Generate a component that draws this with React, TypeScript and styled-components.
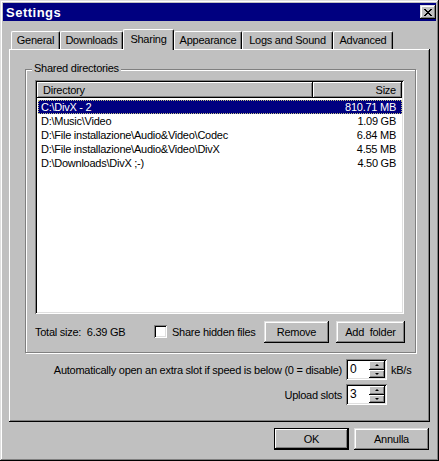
import React from 'react'
import styled, { createGlobalStyle, css } from 'styled-components'

const GlobalStyle = createGlobalStyle`
  html, body { margin: 0; padding: 0; background: #c0c0c0; }
  body { font-family: "Liberation Sans", Arial, sans-serif; font-size: 11px; letter-spacing: -0.25px; color: #000; }
  * { box-sizing: border-box; }
`

const raised = css`
  box-shadow: inset -1px -1px #000, inset 1px 1px #dfdfdf, inset -2px -2px #808080, inset 2px 2px #fff;
`
const sunken = css`
  box-shadow: inset 1px 1px #808080, inset -1px -1px #fff, inset 2px 2px #000, inset -2px -2px #dfdfdf;
`

const Window = styled.div`
  width: 439px;
  height: 461px;
  background: #c0c0c0;
  padding: 3px;
  display: flex;
  flex-direction: column;
  ${raised}
`

const TitleBar = styled.div`
  height: 18px;
  background: #000080;
  color: #fff;
  display: flex;
  align-items: center;
  justify-content: space-between;
  padding: 0 0 0 3px;
  font-weight: bold;
  font-size: 13px;
  letter-spacing: 0.5px;
`

const CloseBtn = styled.div`
  width: 16px;
  height: 14px;
  background: #c0c0c0;
  display: flex;
  align-items: center;
  justify-content: center;
  ${raised}
`

const Body = styled.div`
  flex: 1;
  padding: 8px 6px 0 6px;
  display: flex;
  flex-direction: column;
`

const TabStrip = styled.div`
  height: 20px;
  display: flex;
  align-items: flex-end;
  padding-left: 2px;
`

const Tab = styled.div<{ $active?: boolean; $w: number }>`
  position: relative;
  z-index: ${p => (p.$active ? 2 : 1)};
  width: ${p => p.$w}px;
  height: ${p => (p.$active ? 21 : 18)}px;
  margin-bottom: ${p => (p.$active ? -1 : 0)}px;
  padding-bottom: ${p => (p.$active ? 3 : 1)}px;
  background: #c0c0c0;
  border-top: 1px solid #fff;
  border-left: 1px solid #fff;
  border-right: 1px solid #000;
  border-top-left-radius: 2px;
  border-top-right-radius: 2px;
  box-shadow: inset -1px 0 #808080;
  display: flex;
  align-items: center;
  justify-content: center;
  white-space: nowrap;
`

const Panel = styled.div`
  height: 373px;
  padding: 20px 14px 0 16px;
  display: flex;
  flex-direction: column;
  box-shadow: inset -1px -1px #000, inset 1px 1px #fff, inset -2px -2px #808080;
`

const GroupBox = styled.div`
  position: relative;
  height: 284px;
  border: 1px solid #808080;
  box-shadow: inset 1px 1px #fff, 1px 1px #fff;
  padding: 10px 10px 0 9px;
  display: flex;
  flex-direction: column;
`

const GroupLabel = styled.span`
  position: absolute;
  top: -8px;
  left: 6px;
  padding: 0 2px;
  background: #c0c0c0;
`

const ListView = styled.div`
  width: 369px;
  height: 234px;
  background: #fff;
  padding: 2px;
  ${sunken}
`

const Columns = css`
  display: grid;
  grid-template-columns: 276px 89px;
`

const HeaderRow = styled.div`
  ${Columns}
  height: 16px;
`

const HeaderCell = styled.div<{ $right?: boolean }>`
  background: #c0c0c0;
  display: flex;
  align-items: center;
  justify-content: ${p => (p.$right ? 'flex-end' : 'flex-start')};
  padding: 0 6px;
  box-shadow: inset -1px -1px #000, inset 1px 1px #fff, inset -2px -2px #808080;
`

const Rows = styled.div`
  padding-top: 2px;
`

const Row = styled.div<{ $selected?: boolean }>`
  display: grid;
  grid-template-columns: 275px 89px;
  margin-left: 1px;
  height: 14px;
  line-height: 14px;
  background: ${p => (p.$selected ? '#000080' : 'transparent')};
  color: ${p => (p.$selected ? '#fff' : '#000')};
  outline: ${p => (p.$selected ? '1px dotted #c0c080' : 'none')};
  outline-offset: -1px;
`

const Cell = styled.span<{ $right?: boolean }>`
  padding: ${p => (p.$right ? '0 6px 0 0' : '0 0 0 3px')};
  text-align: ${p => (p.$right ? 'right' : 'left')};
  white-space: nowrap;
`

const ActionRow = styled.div`
  display: flex;
  align-items: center;
  margin-top: 6px;
  height: 23px;
`

const TotalSize = styled.span`
  width: 119px;
  white-space: pre;
`

const CheckLabel = styled.label`
  flex: 1;
  display: flex;
  align-items: center;
  gap: 5px;
`

const CheckBox = styled.span`
  width: 13px;
  height: 13px;
  background: #fff;
  ${sunken}
`

const Button = styled.div<{ $w: number; $default?: boolean }>`
  width: ${p => p.$w}px;
  height: 22px;
  background: #c0c0c0;
  display: flex;
  align-items: center;
  justify-content: center;
  white-space: pre;
  ${p =>
    p.$default
      ? css`
          box-shadow: inset 0 0 0 1px #000, inset -2px -2px #000, inset 2px 2px #fff, inset -3px -3px #808080;
        `
      : raised}
`

const ButtonGap = styled.span`
  width: 7px;
`

const SettingsGrid = styled.div`
  display: grid;
  grid-template-columns: 1fr 41px 25px;
  column-gap: 4px;
  row-gap: 4px;
  margin-top: 6px;
  align-items: center;
`

const SettingLabel = styled.span`
  justify-self: end;
  white-space: nowrap;
`

const Spinner = styled.div`
  height: 21px;
  background: #fff;
  padding: 2px;
  display: flex;
  ${sunken}
`

const SpinValue = styled.span`
  flex: 1;
  padding: 1px 0 0 2px;
  font-size: 12px;
`

const SpinButtons = styled.div`
  width: 16px;
  display: flex;
  flex-direction: column;
`

const SpinButton = styled.div`
  flex: 1;
  background: #c0c0c0;
  display: flex;
  align-items: center;
  justify-content: center;
  box-shadow: inset -1px -1px #000, inset 1px 1px #fff, inset -2px -2px #808080;
`

const Arrow = styled.span<{ $up?: boolean }>`
  width: 0;
  height: 0;
  border-left: 2px solid transparent;
  border-right: 2px solid transparent;
  ${p => (p.$up ? 'border-bottom: 2px solid #000;' : 'border-top: 2px solid #000;')}
`

const Footer = styled.div`
  display: flex;
  justify-content: flex-end;
  gap: 5px;
  margin-top: 6px;
  padding-right: 1px;
`

const tabs = [
  { label: 'General', w: 49 },
  { label: 'Downloads', w: 63 },
  { label: 'Sharing', w: 51, active: true },
  { label: 'Appearance', w: 68 },
  { label: 'Logs and Sound', w: 91 },
  { label: 'Advanced', w: 60 },
]

const dirs = [
  { path: 'C:\\DivX - 2', size: '810.71 MB' },
  { path: 'D:\\Music\\Video', size: '1.09 GB' },
  { path: 'D:\\File installazione\\Audio&Video\\Codec', size: '6.84 MB' },
  { path: 'D:\\File installazione\\Audio&Video\\DivX', size: '4.55 MB' },
  { path: 'D:\\Downloads\\DivX ;-)', size: '4.50 GB' },
]

function SpinBox({ value }: { value: string }) {
  return (
    <Spinner>
      <SpinValue>{value}</SpinValue>
      <SpinButtons>
        <SpinButton><Arrow $up /></SpinButton>
        <SpinButton><Arrow /></SpinButton>
      </SpinButtons>
    </Spinner>
  )
}

export default function App() {
  return (
    <>
      <GlobalStyle />
      <Window>
        <TitleBar>
          <span>Settings</span>
          <CloseBtn>
            <svg width="8" height="7" viewBox="0 0 8 7">
              <path d="M0 0 L7 7 M1 0 L8 7 M7 0 L0 7 M8 0 L1 7" stroke="#000" strokeWidth="1" shapeRendering="crispEdges" />
            </svg>
          </CloseBtn>
        </TitleBar>
        <Body>
          <TabStrip>
            {tabs.map(t => (
              <Tab key={t.label} $w={t.w} $active={t.active}>{t.label}</Tab>
            ))}
          </TabStrip>
          <Panel>
            <GroupBox>
              <GroupLabel>Shared directories</GroupLabel>
              <ListView>
                <HeaderRow>
                  <HeaderCell>Directory</HeaderCell>
                  <HeaderCell $right>Size</HeaderCell>
                </HeaderRow>
                <Rows>
                  {dirs.map((d, i) => (
                    <Row key={d.path} $selected={i === 0}>
                      <Cell>{d.path}</Cell>
                      <Cell $right>{d.size}</Cell>
                    </Row>
                  ))}
                </Rows>
              </ListView>
              <ActionRow>
                <TotalSize>{'Total size:  6.39 GB'}</TotalSize>
                <CheckLabel>
                  <CheckBox />
                  Share hidden files
                </CheckLabel>
                <Button $w={65}>Remove</Button>
                <ButtonGap />
                <Button $w={69}>{'Add  folder'}</Button>
              </ActionRow>
            </GroupBox>
            <SettingsGrid>
              <SettingLabel>Automatically open an extra slot if speed is below (0 = disable)</SettingLabel>
              <SpinBox value="0" />
              <span>kB/s</span>
              <SettingLabel>Upload slots</SettingLabel>
              <SpinBox value="3" />
              <span />
            </SettingsGrid>
          </Panel>
          <Footer>
            <Button $w={75} $default>OK</Button>
            <Button $w={75}>Annulla</Button>
          </Footer>
        </Body>
      </Window>
    </>
  )
}
